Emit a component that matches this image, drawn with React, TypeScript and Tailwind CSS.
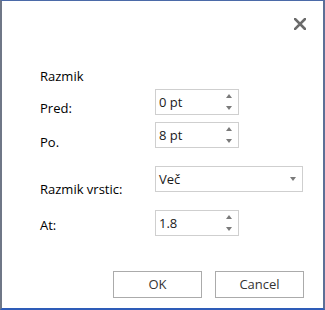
import React from 'react';

const font = { fontFamily: '"Open Sans", "Liberation Sans", sans-serif' };

const Spinner: React.FC = () => (
  <div className="flex flex-col items-center gap-[8px] mr-[6px]">
    <svg width="6" height="4" viewBox="0 0 6 4">
      <path d="M3 0 L6 4 L0 4 Z" fill="#7a7a7a" />
    </svg>
    <svg width="6" height="4" viewBox="0 0 6 4">
      <path d="M0 0 L6 0 L3 4 Z" fill="#7a7a7a" />
    </svg>
  </div>
);

const NumberBox: React.FC<{ value: string }> = ({ value }) => (
  <div className="w-[84px] h-[26px] border border-[#cfcfcf] bg-white flex items-center justify-between pl-[3px]">
    <span className="text-[13px] text-[#1a1a1a] leading-none">{value}</span>
    <Spinner />
  </div>
);

const Row: React.FC<{ label: string; offset: string; children: React.ReactNode; className?: string }> = ({
  label,
  offset,
  children,
  className,
}) => (
  <div className={`flex items-start ${className ?? ''}`}>
    <div className={`w-[115px] text-[13px] leading-[18px] text-black ${offset}`}>{label}</div>
    {children}
  </div>
);

export default function App() {
  return (
    <div
      style={font}
      className="box-border w-[325px] h-[310px] bg-white border-t border-t-[#4b6aa8] border-l-2 border-l-[#6f7787] border-r-2 border-r-[#5d6f96] border-b-2 border-b-[#2e5cb8] flex flex-col"
    >
      <div className="flex justify-end pt-[17px] pr-[17px]">
        <svg width="12" height="12" viewBox="0 0 12 12">
          <path d="M1 1 L11 11 M11 1 L1 11" stroke="#6b6b6b" strokeWidth="2.6" strokeLinecap="square" />
        </svg>
      </div>

      <div className="pl-[38px] flex flex-col">
        <div className="mt-[37px] text-[13px] leading-[18px] text-black">Razmik</div>

        <Row label="Pred:" offset="pt-[10px]" className="mt-[4px]">
          <NumberBox value="0 pt" />
        </Row>

        <Row label="Po." offset="pt-[11px]" className="mt-[5px]">
          <NumberBox value="8 pt" />
        </Row>

        <Row label="Razmik vrstic:" offset="pt-[14px]" className="mt-[15px]">
          <div className="w-[148px] h-[26px] border border-[#cfcfcf] bg-white flex items-center justify-between pl-[3px] pr-[6px]">
            <span className="text-[13px] text-[#1a1a1a] leading-none">Več</span>
            <svg width="6" height="4" viewBox="0 0 6 4">
              <path d="M0 0 L6 0 L3 4 Z" fill="#7a7a7a" />
            </svg>
          </div>
        </Row>

        <Row label="At:" offset="pt-[6px]" className="mt-[12px]">
          <NumberBox value="1.8" />
        </Row>
      </div>

      <div className="flex justify-end gap-[13px] pr-[19px] mt-[35px]">
        <button className="w-[89px] h-[27px] border border-[#ababab] bg-white text-[13px] text-[#333]">OK</button>
        <button className="w-[89px] h-[27px] border border-[#ababab] bg-white text-[13px] text-[#333]">Cancel</button>
      </div>
    </div>
  );
}
